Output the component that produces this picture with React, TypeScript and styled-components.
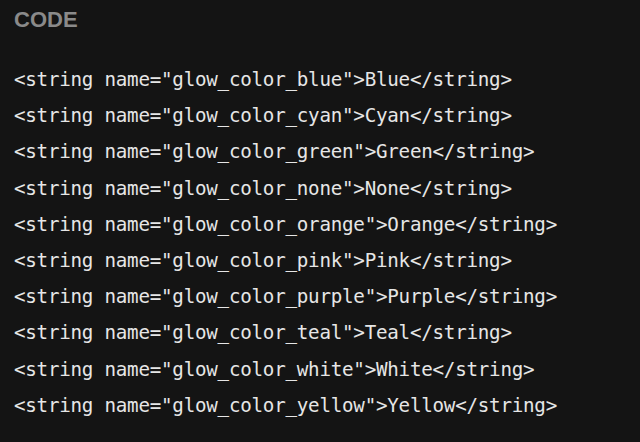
import React from "react";
import styled, { createGlobalStyle } from "styled-components";

const Global = createGlobalStyle`
  html, body { margin: 0; padding: 0; background: #141414; }
`;

const Page = styled.div`
  width: 640px;
  height: 442px;
  background: #141414;
  padding: 8px 14px 0 14px;
  box-sizing: border-box;
  overflow: hidden;
`;

const Heading = styled.div`
  font-family: "Liberation Sans", Arial, sans-serif;
  font-weight: bold;
  font-size: 22px;
  line-height: 24px;
  color: #8a8a8a;
`;

const Code = styled.pre`
  margin: 30px 0 0 0;
  font-family: "DejaVu Sans Mono", monospace;
  font-size: 19.2px;
  letter-spacing: -0.24px;
  line-height: 36.2px;
  color: #e6e6e6;
`;

const Line = styled.div``;

const colors = ["blue", "cyan", "green", "none", "orange", "pink", "purple", "teal", "white", "yellow"];

export default function App() {
  return (
    <Page>
      <Global />
      <Heading>CODE</Heading>
      <Code>
        {colors.map((c) => (
          <Line key={c}>
            {`<string name="glow_color_${c}">${c[0].toUpperCase() + c.slice(1)}</string>`}
          </Line>
        ))}
      </Code>
    </Page>
  );
}
